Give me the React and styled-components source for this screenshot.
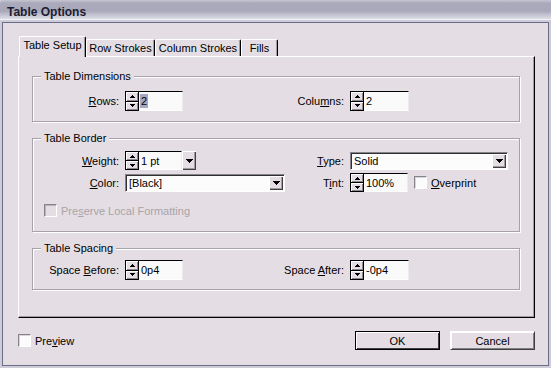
import React from "react";
import styled, { createGlobalStyle } from "styled-components";

const GlobalStyle = createGlobalStyle`
  html, body {
    margin: 0;
    padding: 0;
    background: #cdcdda;
  }
  body {
    font-family: "Liberation Sans", Arial, sans-serif;
    font-size: 11px;
    color: #000;
  }
`;

const Window = styled.div`
  width: 551px;
  height: 368px;
  box-sizing: border-box;
  display: flex;
  flex-direction: column;
  background: #cdcdda;
  padding: 0 2px 2px 2px;
`;

const TitleBar = styled.div`
  margin: 0 -2px;
  height: 20px;
  box-sizing: border-box;
  padding: 5px 0 0 7px;
  line-height: 15px;
  font-size: 12px;
  font-weight: bold;
  color: #1c1c30;
  border-bottom: 1px solid #f2f2f6;
  border-top-left-radius: 4px;
  background: linear-gradient(#c6c6d2 0, #aaaabc 3px, #a8a8ba 11px, #c4c4d2 15px, #e4e4ec 20px);
`;

const Body = styled.div`
  flex: 1;
  margin-top: 2px;
  display: flex;
  flex-direction: column;
  border: 1px solid #6c6c88;
  background: #e4dee4;
  padding: 13px 13px 0 15px;
`;

const Tabs = styled.div`
  display: flex;
  align-items: flex-end;
  height: 20px;
  padding-left: 1px;
`;

const Tab = styled.div`
  position: relative;
  width: ${(p) => p.$w}px;
  box-sizing: border-box;
  height: ${(p) => (p.$active ? 21 : 17)}px;
  margin-bottom: ${(p) => (p.$active ? -1 : 0)}px;
  z-index: ${(p) => (p.$active ? 1 : 0)};
  background: #e4dee4;
  border-top: 1px solid #fff;
  border-left: 1px solid #fff;
  border-right: 1px solid #000;
  box-shadow: inset -1px 0 0 #a09ca0;
  border-radius: 2px 2px 0 0;
  text-align: center;
  line-height: ${(p) => (p.$active ? 14 : 15)}px;
  padding-top: 1px;
  white-space: nowrap;
`;

const Panel = styled.div`
  height: 262px;
  box-sizing: border-box;
  display: flex;
  flex-direction: column;
  gap: 16px;
  border-top: 1px solid #fff;
  border-left: 1px solid #fff;
  border-right: 1px solid #000;
  border-bottom: 1px solid #000;
  box-shadow: inset -1px -1px 0 #a09ca0;
  padding: 19px 14px 0 13px;
`;

const Group = styled.div`
  position: relative;
  display: flex;
  flex-direction: column;
  border: 1px solid #a6a2a8;
  box-shadow: inset 1px 1px 0 #fff, 1px 1px 0 #fff;
  padding: ${(p) => p.$pt}px 0 ${(p) => p.$pb}px 0;
`;

const Legend = styled.div`
  position: absolute;
  top: -7px;
  left: 8px;
  padding: 0 3px;
  line-height: 13px;
  background: #e4dee4;
`;

const Row = styled.div`
  display: flex;
  align-items: center;
  height: ${(p) => p.$h}px;
  margin-top: ${(p) => p.$mt || 0}px;
`;

const Field = styled.div`
  display: flex;
  align-items: center;
  gap: 6px;
  min-width: 0;
  flex: ${(p) => (p.$w ? `0 0 ${p.$w}px` : "1")};
  height: 100%;
`;

const Label = styled.span`
  width: ${(p) => p.$w}px;
  flex: none;
  text-align: right;
  white-space: nowrap;
`;

const Key = styled.span`
  text-decoration: underline;
`;

const SpinBox = styled.div`
  display: flex;
  width: ${(p) => p.$w}px;
  height: 100%;
  box-sizing: border-box;
  flex: none;
`;

const Steppers = styled.div`
  width: 14px;
  box-sizing: border-box;
  display: flex;
  flex-direction: column;
  border: 1px solid #000;
  background: #000;
  gap: 1px;
`;

const Step = styled.div`
  flex: 1;
  display: flex;
  align-items: center;
  justify-content: center;
  background: #e4dee4;
  box-shadow: inset 1px 1px 0 #fff, inset -1px -1px 0 #8c888c;
`;

const Value = styled.div`
  flex: 1;
  display: flex;
  align-items: center;
  box-sizing: border-box;
  padding-left: 1px;
  background: #fafafa;
  border-top: 1px solid #000;
  border-right: 1px solid #ecebee;
  border-bottom: 1px solid #fff;
  white-space: nowrap;
`;

const Text = styled.span`
  padding: 1px 1px;
  line-height: 12px;
  background: ${(p) => (p.$selected ? "#a9a6c2" : "transparent")};
`;

const DropButton = styled.div`
  width: 14px;
  flex: none;
  display: flex;
  align-items: center;
  justify-content: center;
  background: #e4dee4;
  box-shadow: inset 1px 1px 0 #fff, inset -1px -1px 0 #404040, inset -2px -2px 0 #a09ca0;
`;

const Select = styled.div`
  display: flex;
  width: ${(p) => p.$w}px;
  height: 18px;
  box-sizing: border-box;
  flex: none;
  padding: 1px;
  border: 1px solid;
  border-color: #86828a #fff #fff #86828a;
  background: #fcfcfc;
  box-shadow: inset 1px 1px 0 #303030;
`;

const SelectText = styled.div`
  flex: 1;
  display: flex;
  align-items: center;
  padding-left: 2px;
`;

const Box = styled.span`
  width: 13px;
  height: 13px;
  flex: none;
  box-sizing: border-box;
  border: 1px solid;
  border-color: #86828a #fff #fff #86828a;
  background: ${(p) => (p.$disabled ? "#e4dee4" : "#fbfbfb")};
  box-shadow: inset 1px 1px 0 ${(p) => (p.$disabled ? "#b8b4b8" : "#d8d4d8")};
`;

const Check = styled.label`
  display: flex;
  align-items: center;
  gap: 4px;
  margin-left: ${(p) => p.$ml || 0}px;
  color: ${(p) => (p.$disabled ? "#a8a4a8" : "#000")};
  white-space: nowrap;
`;

const Footer = styled.div`
  flex: 1;
  display: flex;
  align-items: center;
  padding-bottom: 2px;
`;

const Buttons = styled.div`
  margin-left: auto;
  display: flex;
  gap: 10px;
`;

const Button = styled.div`
  width: 85px;
  height: 19px;
  box-sizing: border-box;
  display: flex;
  align-items: center;
  justify-content: center;
  background: #e4dee4;
  border: 1px solid ${(p) => (p.$default ? "#000" : "transparent")};
  box-shadow: ${(p) =>
    p.$default
      ? "inset 1px 1px 0 #fff, inset -1px -1px 0 #404040"
      : "inset 1px 1px 0 #fff, inset -1px -1px 0 #808080"};
  ${(p) => (!p.$default ? "border-color: #fff #404040 #404040 #fff;" : "")}
`;

const Arrow = ({ dir = "down", w = 5, h = 3 }) => (
  <svg width={w} height={h} viewBox={`0 0 ${w} ${h}`} shapeRendering="crispEdges">
    <polygon
      points={dir === "up" ? `0,${h} ${w},${h} ${w / 2},0` : `0,0 ${w},0 ${w / 2},${h}`}
      fill="#000"
    />
  </svg>
);

const SpinField = ({ w, value, selected, drop }) => (
  <SpinBox $w={w}>
    <Steppers>
      <Step>
        <Arrow dir="up" />
      </Step>
      <Step>
        <Arrow />
      </Step>
    </Steppers>
    <Value>
      <Text $selected={selected}>{value}</Text>
    </Value>
    {drop && (
      <DropButton>
        <Arrow w={7} h={4} />
      </DropButton>
    )}
  </SpinBox>
);

const Dropdown = ({ w, value }) => (
  <Select $w={w}>
    <SelectText>{value}</SelectText>
    <DropButton>
      <Arrow w={7} h={4} />
    </DropButton>
  </Select>
);

export default function App() {
  return (
    <>
      <GlobalStyle />
      <Window>
        <TitleBar>Table Options</TitleBar>
        <Body>
          <Tabs>
            <Tab $active $w={67}>Table Setup</Tab>
            <Tab $w={69}>Row Strokes</Tab>
            <Tab $w={86}>Column Strokes</Tab>
            <Tab $w={37}>Fills</Tab>
          </Tabs>
          <Panel>
            <Group $pt={14} $pb={10}>
              <Legend>Table Dimensions</Legend>
              <Row $h={20}>
                <Field $w={237}>
                  <Label $w={86}>
                    <Key>R</Key>ows:
                  </Label>
                  <SpinField w={58} value="2" selected />
                </Field>
                <Field>
                  <Label $w={74}>
                    Colu<Key>m</Key>ns:
                  </Label>
                  <SpinField w={59} value="2" />
                </Field>
              </Row>
            </Group>

            <Group $pt={12} $pb={14}>
              <Legend>Table Border</Legend>
              <Row $h={19}>
                <Field $w={237}>
                  <Label $w={86}>
                    <Key>W</Key>eight:
                  </Label>
                  <SpinField w={71} value="1 pt" drop />
                </Field>
                <Field>
                  <Label $w={74}>
                    <Key>T</Key>ype:
                  </Label>
                  <Dropdown w={158} value="Solid" />
                </Field>
              </Row>
              <Row $h={19} $mt={3}>
                <Field $w={237}>
                  <Label $w={86}>
                    <Key>C</Key>olor:
                  </Label>
                  <Dropdown w={160} value="[Black]" />
                </Field>
                <Field>
                  <Label $w={74}>
                    T<Key>i</Key>nt:
                  </Label>
                  <SpinField w={58} value="100%" />
                  <Check>
                    <Box />
                    <span>
                      <Key>O</Key>verprint
                    </span>
                  </Check>
                </Field>
              </Row>
              <Row $h={13} $mt={12}>
                <Check $ml={11} $disabled>
                  <Box $disabled />
                  <span>
                    Pre<Key>s</Key>erve Local Formatting
                  </span>
                </Check>
              </Row>
            </Group>

            <Group $pt={11} $pb={9}>
              <Legend>Table Spacing</Legend>
              <Row $h={20}>
                <Field $w={237}>
                  <Label $w={86}>
                    Space <Key>B</Key>efore:
                  </Label>
                  <SpinField w={58} value="0p4" />
                </Field>
                <Field>
                  <Label $w={74}>
                    Space <Key>A</Key>fter:
                  </Label>
                  <SpinField w={59} value="-0p4" />
                </Field>
              </Row>
            </Group>
          </Panel>
          <Footer>
            <Check>
              <Box />
              <span>
                Pre<Key>v</Key>iew
              </span>
            </Check>
            <Buttons>
              <Button $default>OK</Button>
              <Button>Cancel</Button>
            </Buttons>
          </Footer>
        </Body>
      </Window>
    </>
  );
}
